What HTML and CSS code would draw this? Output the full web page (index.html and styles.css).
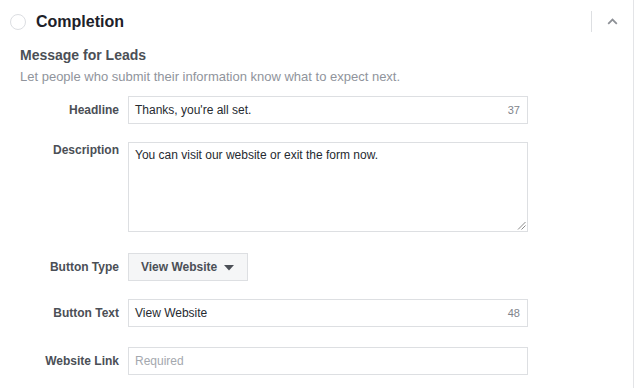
FILE: index.html
```html
<!DOCTYPE html>
<html>
<head>
<meta charset="utf-8">
<link rel="stylesheet" href="styles.css">
</head>
<body>
<div class="panel">
  <div class="header">
    <span class="radio"></span>
    <span class="title">Completion</span>
    <div class="header-tools">
      <span class="divider"></span>
      <svg class="chevron" width="11" height="7" viewBox="0 0 11 7"><polyline points="1.2,5.8 5.5,1.6 9.8,5.8" fill="none" stroke="#8d9096" stroke-width="1.8"/></svg>
    </div>
  </div>
  <div class="section">
    <div class="section-title">Message for Leads</div>
    <div class="hint">Let people who submit their information know what to expect next.</div>
    <div class="rows">
      <div class="row row-gap-18">
        <div class="label">Headline</div>
        <div class="field">
          <span class="value">Thanks, you're all set.</span>
          <span class="count">37</span>
        </div>
      </div>
      <div class="row row-gap-21">
        <div class="label label-top">Description</div>
        <div class="field field-area">
          <span class="value">You can visit our website or exit the form now.</span>
          <svg class="grip" width="9" height="9" viewBox="0 0 9 9"><line x1="8.5" y1="1" x2="1" y2="8.5" stroke="#8a8a8a" stroke-width="1"/><line x1="8.5" y1="4.5" x2="4.5" y2="8.5" stroke="#8a8a8a" stroke-width="1"/></svg>
        </div>
      </div>
      <div class="row row-gap-18">
        <div class="label">Button Type</div>
        <div class="select">
          <span>View Website</span>
          <svg class="caret" width="10" height="6" viewBox="0 0 10 6"><polygon points="0,0 10,0 5,5.5" fill="#4b4f56"/></svg>
        </div>
      </div>
      <div class="row row-gap-20">
        <div class="label">Button Text</div>
        <div class="field">
          <span class="value">View Website</span>
          <span class="count">48</span>
        </div>
      </div>
      <div class="row">
        <div class="label">Website Link</div>
        <div class="field">
          <span class="placeholder">Required</span>
        </div>
      </div>
    </div>
  </div>
</div>
</body>
</html>
```

FILE: styles.css
```css
html, body {
  margin: 0;
  padding: 0;
  background: #ffffff;
}
body {
  font-family: "Liberation Sans", Arial, sans-serif;
  color: #1d2129;
}
.panel {
  box-sizing: border-box;
  min-height: 388px;
  border-right: 1px solid #e3e4e7;
}
.header {
  display: flex;
  align-items: center;
  height: 43px;
  padding-left: 10px;
  padding-right: 15px;
}
.radio {
  box-sizing: border-box;
  width: 16px;
  height: 16px;
  border-radius: 50%;
  border: 1.5px solid #dcdee2;
  margin-top: 1px;
}
.title {
  margin-left: 10px;
  font-size: 16px;
  font-weight: bold;
  color: #1d2129;
}
.header-tools {
  margin-left: auto;
  display: flex;
  align-items: center;
}
.divider {
  width: 1px;
  height: 21px;
  background: #dddfe2;
  margin-right: 15px;
}
.chevron {
  display: block;
  margin-top: -1px;
}
.section {
  padding: 3px 0 0 20px;
}
.section-title {
  font-size: 14px;
  line-height: 18px;
  font-weight: bold;
  color: #4b4f56;
}
.hint {
  font-size: 13px;
  line-height: 16px;
  margin-top: 5px;
  color: #90949c;
}
.rows {
  margin-top: 11px;
  display: flex;
  flex-direction: column;
}
.row {
  display: flex;
  align-items: flex-start;
}
.row-gap-18 { margin-bottom: 18px; }
.row-gap-20 { margin-bottom: 20px; }
.row-gap-21 { margin-bottom: 21px; }
.label {
  width: 99px;
  margin-right: 9px;
  text-align: right;
  font-size: 12px;
  line-height: 16px;
  font-weight: bold;
  color: #4b4f56;
  padding-top: 6px;
}
.label-top {
  padding-top: 0;
}
.field {
  position: relative;
  box-sizing: border-box;
  width: 400px;
  height: 28px;
  border: 1px solid #dddfe2;
  background: #fff;
  display: flex;
  align-items: center;
  padding: 0 7px 0 6px;
  font-size: 12px;
}
.field-area {
  height: 90px;
  align-items: flex-start;
  padding-top: 4px;
}
.value {
  color: #262a30;
  line-height: 16px;
  flex: 1;
}
.count {
  color: #80848b;
  font-size: 11px;
}
.placeholder {
  color: #a4a8ae;
}
.grip {
  position: absolute;
  right: 1px;
  bottom: 1px;
}
.select {
  box-sizing: border-box;
  width: 120px;
  height: 28px;
  border: 1px solid #dddfe2;
  background: #f5f6f7;
  display: flex;
  align-items: center;
  padding-left: 12px;
  font-size: 12px;
  font-weight: bold;
  color: #4b4f56;
}
.caret {
  margin-left: 7px;
  margin-top: 1px;
}
```
